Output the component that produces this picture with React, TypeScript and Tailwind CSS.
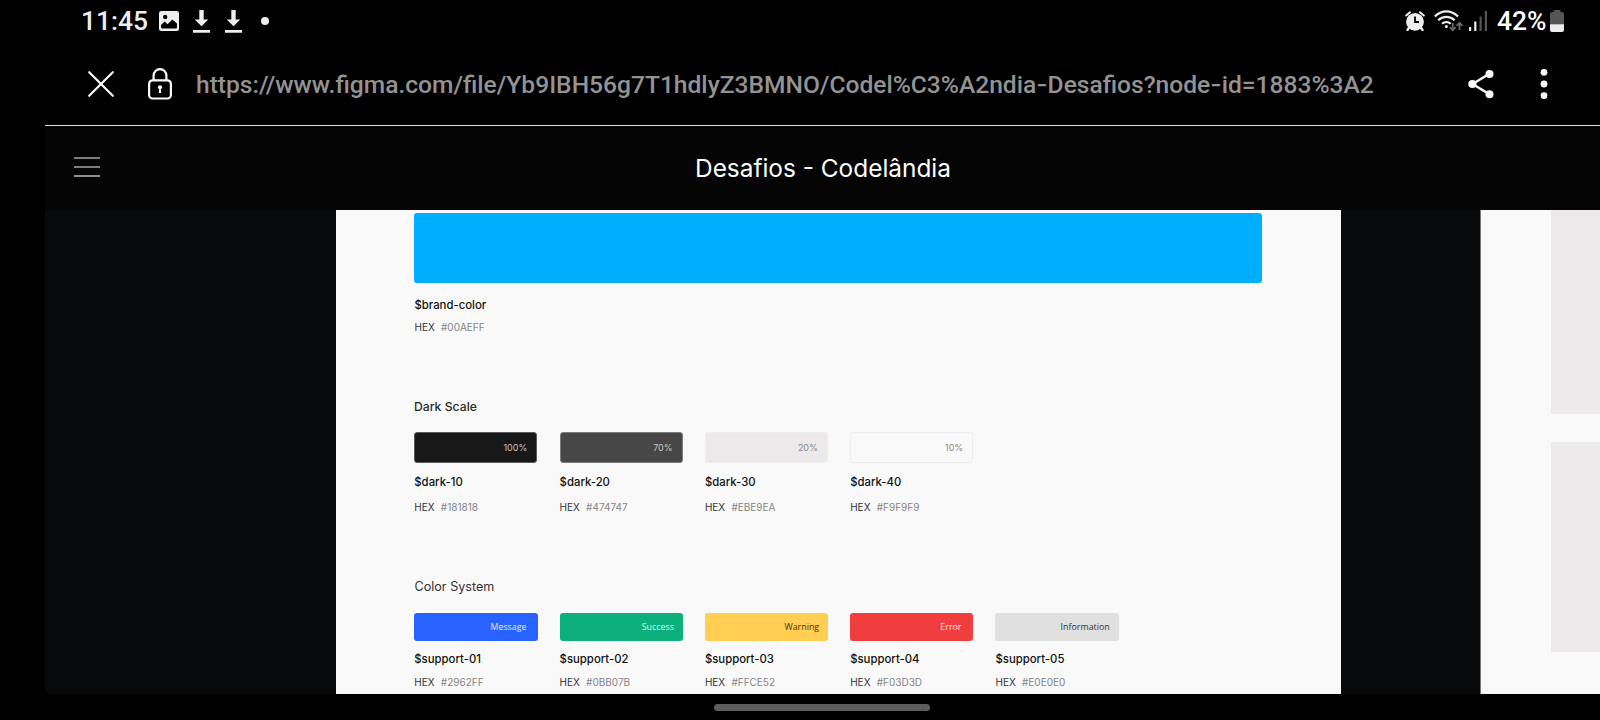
type Swatch = { name: string; hex: string; label: string; fill: string; tone: string };

const darkScale: Swatch[] = [
  { name: "$dark-10", hex: "#181818", label: "100%", fill: "bg-[#181818] border-[#5a5a5a]", tone: "text-[#c4c4c4]" },
  { name: "$dark-20", hex: "#474747", label: "70%", fill: "bg-[#474747] border-[#7c7c7c]", tone: "text-[#c4c4c4]" },
  { name: "$dark-30", hex: "#EBE9EA", label: "20%", fill: "bg-[#ebe9ea] border-[#efedee]", tone: "text-[#8a8a8a]" },
  { name: "$dark-40", hex: "#F9F9F9", label: "10%", fill: "bg-[#f9f9f9] border-[#efeeef]", tone: "text-[#8a8a8a]" },
];

const colorSystem: Swatch[] = [
  { name: "$support-01", hex: "#2962FF", label: "Message", fill: "bg-[#2962ff]", tone: "text-[#e3eaff] pr-[11px]" },
  { name: "$support-02", hex: "#0BB07B", label: "Success", fill: "bg-[#0bb07b]", tone: "text-[#dff6ee] pr-[9px]" },
  { name: "$support-03", hex: "#FFCE52", label: "Warning", fill: "bg-[#ffce52]", tone: "text-[#40361a] pr-[9px]" },
  { name: "$support-04", hex: "#F03D3D", label: "Error", fill: "bg-[#f03d3d]", tone: "text-[#fde6e6] pr-[12px]" },
  { name: "$support-05", hex: "#E0E0E0", label: "Information", fill: "bg-[#e0e0e0]", tone: "text-[#333] pr-[9px]" },
];

function Name({ children }: { children: string }) {
  return <div className="h-4 text-[11.35px] font-medium leading-4 text-[#111]">{children}</div>;
}

function Hex({ value }: { value: string }) {
  return (
    <div className="flex h-4 text-[10px] leading-4">
      <span className="w-[26.5px] text-[#333]">HEX</span>
      <span className="text-[#858585]">{value}</span>
    </div>
  );
}

function Download() {
  return (
    <svg className="h-6 w-[17px]" viewBox="0 0 17 24" fill="#eee">
      <path d="M6.300 1h4.400v9.500h4.600L8.500 17.300 1.700 10.500h4.600zM0 21h17v2.700H0z" />
    </svg>
  );
}

function StatusBar() {
  return (
    <div className="flex h-[42px] items-center justify-between pl-9 pr-9 font-['Roboto',sans-serif] text-[26.4px] font-medium leading-none text-[#eee]">
      <div className="flex items-center">
        <span className="w-[78px] whitespace-nowrap">11:45</span>
        <svg className="mr-[14px] h-5 w-5" viewBox="0 0 20 20">
          <rect width="20" height="20" rx="2.500" fill="#eee" />
          <circle cx="6.200" cy="6" r="2.200" fill="#000" />
          <path d="M2 15.500v-1.600l3.600-3.300 3 2.600L13.200 8.400l4.800 4v3.800l-.5 1.200H2.500z" fill="#000" />
        </svg>
        <Download />
        <span className="w-[15px]" />
        <Download />
        <span className="ml-[19px] h-2 w-2 rounded-full bg-[#eee]" />
      </div>
      <div className="flex items-center">
        <svg className="mr-[9px] h-5 w-5" viewBox="0 0 20 20" fill="#eee">
          <circle cx="10" cy="10.800" r="8.900" />
          <path d="M1.200 4.500 5 1.300M18.800 4.500 15 1.300" stroke="#eee" strokeWidth="2" strokeLinecap="round" />
          <path d="m4.500 16-2 3M15.500 16l2 3" stroke="#eee" strokeWidth="2.400" strokeLinecap="round" />
          <path d="M10 5.500V11h4" stroke="#000" strokeWidth="1.800" fill="none" />
        </svg>
        <svg className="mr-[6px] h-6 w-[29px]" viewBox="0 0 29 24" fill="none">
          <g stroke="#eee" strokeWidth="2.200">
            <path d="M.8 7.600C7.500.7 17.300.7 24 7.600" />
            <path d="M4.200 11.300c4.700-4.600 11.700-4.600 16.400 0" />
            <path d="M8 14.800c2.600-2.300 6.200-2.300 8.800 0" />
          </g>
          <circle cx="12.400" cy="17.600" r="1.500" fill="#eee" />
          <g stroke="#6a6a6a" strokeWidth="1.800">
            <path d="M18.800 14v7.200m-2.900-3 2.900 3 2.900-3M25.500 21v-7.200m-2.900 3 2.900-3 2.900 3" />
          </g>
        </svg>
        <svg className="mr-[10px] h-5 w-[18px]" viewBox="0 0 18 20">
          <path d="M0 16h2.200v4H0zM5.200 10.500h2.200V20H5.200z" fill="#eee" />
          <path d="M10.500 5.500h2.200V20h-2.200zM15.800 0H18v20h-2.200z" fill="#555" />
        </svg>
        <span className="w-[53px] whitespace-nowrap text-white">42%</span>
        <svg className="h-[22px] w-[14px]" viewBox="0 0 14 22">
          <path d="M3.500 0h7v2H12a2 2 0 0 1 2 2v10.500H0V4a2 2 0 0 1 2-2h1.500z" fill="#555" />
          <path d="M0 14.300h14V20a2 2 0 0 1-2 2H2a2 2 0 0 1-2-2z" fill="#eee" />
        </svg>
      </div>
    </div>
  );
}

function AddressBar() {
  return (
    <div className="flex h-[84px] items-center border-b border-[#dcdcdc] pl-[42px] pr-[52px]">
      <svg className="mr-[33px] h-7 w-7 shrink-0" viewBox="0 0 28 28" fill="none" stroke="#fafafa" strokeWidth="2.200" strokeLinecap="round">
        <path d="m2.200 2.200 23.600 23.600M25.800 2.200 2.200 25.800" />
      </svg>
      <svg className="mr-[24px] h-8 w-6 shrink-0" viewBox="0 0 24 32" fill="none" stroke="#fafafa" strokeWidth="2.200">
        <rect x="1.100" y="12.300" width="21.800" height="18.200" rx="3.600" />
        <path d="M5.600 12V7.600a6.400 6.400 0 0 1 12.800 0V12" />
        <circle cx="12" cy="19.300" r="2.100" fill="#fafafa" stroke="none" />
        <path d="M12 19.500v5.600" strokeWidth="2" />
      </svg>
      <span className="grow whitespace-nowrap pt-[2px] font-['Roboto',sans-serif] text-[24.58px] font-medium leading-8 text-[#939393]">
        https://www.figma.com/file/Yb9IBH56g7T1hdlyZ3BMNO/Codel%C3%A2ndia
        <span className="font-['Inter']">-</span>Desafios?node<span className="font-['Inter']">-</span>id=1883%3A2
      </span>
      <svg className="mr-[46px] h-[30px] w-[26px] shrink-0" viewBox="0 0 26 30" fill="#fafafa">
        <path d="M21.500 4.700 4.500 15l17 10.300" fill="none" stroke="#fafafa" strokeWidth="2.400" />
        <circle cx="21.500" cy="4.900" r="4" />
        <circle cx="4.400" cy="15" r="4.100" />
        <circle cx="21.500" cy="25.200" r="4" />
      </svg>
      <svg className="h-[30px] w-[8px] shrink-0" viewBox="0 0 8 30" fill="#fafafa">
        <circle cx="4" cy="3.300" r="3.400" />
        <circle cx="4" cy="15" r="3.400" />
        <circle cx="4" cy="26.700" r="3.400" />
      </svg>
    </div>
  );
}

function PaletteFrame() {
  return (
    <div className="ml-[291px] w-[1005px] shrink-0 bg-[#f9f9f9] pl-[78px] pt-[3px]">
      <div className="h-[70px] w-[848px] rounded-[3px] bg-[#00aeff]" />
      <div className="pl-[0.5px] pt-[14px]">
        <Name>$brand-color</Name>
        <div className="h-[6px]" />
        <Hex value="#00AEFF" />
      </div>

      <h2 className="mt-[64px] h-4 text-[12.2px] font-medium leading-4 text-[#2a2a2a]">Dark Scale</h2>
      <div className="mt-[17px] flex gap-[22.3px] pl-[0.3px]">
        {darkScale.map((s) => (
          <div key={s.name} className="w-[123px]">
            <div className={`flex h-[31px] items-center justify-end rounded-[3px] border pr-[9px] text-[9px] leading-none ${s.fill} ${s.tone}`}>
              {s.label}
            </div>
            <div className="h-[11px]" />
            <Name>{s.name}</Name>
            <div className="h-[9px]" />
            <Hex value={s.hex} />
          </div>
        ))}
      </div>

      <h2 className="mt-[64px] h-4 pl-[0.5px] text-[12.6px] leading-4 text-[#333]">Color System</h2>
      <div className="mt-[18px] flex gap-[22px] pl-[0.3px]">
        {colorSystem.map((s) => (
          <div key={s.name} className="w-[123.3px] shrink-0">
            <div className={`flex h-[28px] items-center justify-end rounded-[3px] font-['Open_Sans',sans-serif] text-[8.9px] leading-none ${s.fill} ${s.tone}`}>
              {s.label}
            </div>
            <div className="h-[10.4px]" />
            <Name>{s.name}</Name>
            <div className="h-[7px]" />
            <Hex value={s.hex} />
          </div>
        ))}
      </div>
    </div>
  );
}

export default function App() {
  return (
    <div className="h-[720px] w-[1600px] overflow-hidden bg-black pl-[45px] font-['Inter',sans-serif]">
      <StatusBar />
      <AddressBar />
      <header className="flex h-[84px] items-center bg-[#050505] px-[29px]">
        <div className="mb-[2px] flex h-5 w-[26px] flex-col justify-between">
          <span className="h-[2px] bg-[#7d7d7d]" />
          <span className="h-[2px] bg-[#7d7d7d]" />
          <span className="h-[2px] bg-[#8d8d8d]" />
        </div>
        <h1 className="grow pr-[25px] text-center text-[24.4px] leading-8 text-white">Desafios - Codelândia</h1>
      </header>
      <main className="flex h-[484px] overflow-hidden rounded-bl-[6px] bg-[#08090a]">
        <PaletteFrame />
        <div className="ml-[139px] grow border-l border-[#777] bg-[#f9f9f9] pl-[69.500px]">
          <div className="h-[204px] bg-[#ebe9ea]" />
          <div className="mt-[27.500px] h-[210.500px] bg-[#ebe9ea]" />
        </div>
      </main>
      <div className="flex h-[26px] items-center justify-center pr-[1px]">
        <div className="h-[7px] w-[216px] rounded-full bg-[#5e5e5e]" />
      </div>
    </div>
  );
}
